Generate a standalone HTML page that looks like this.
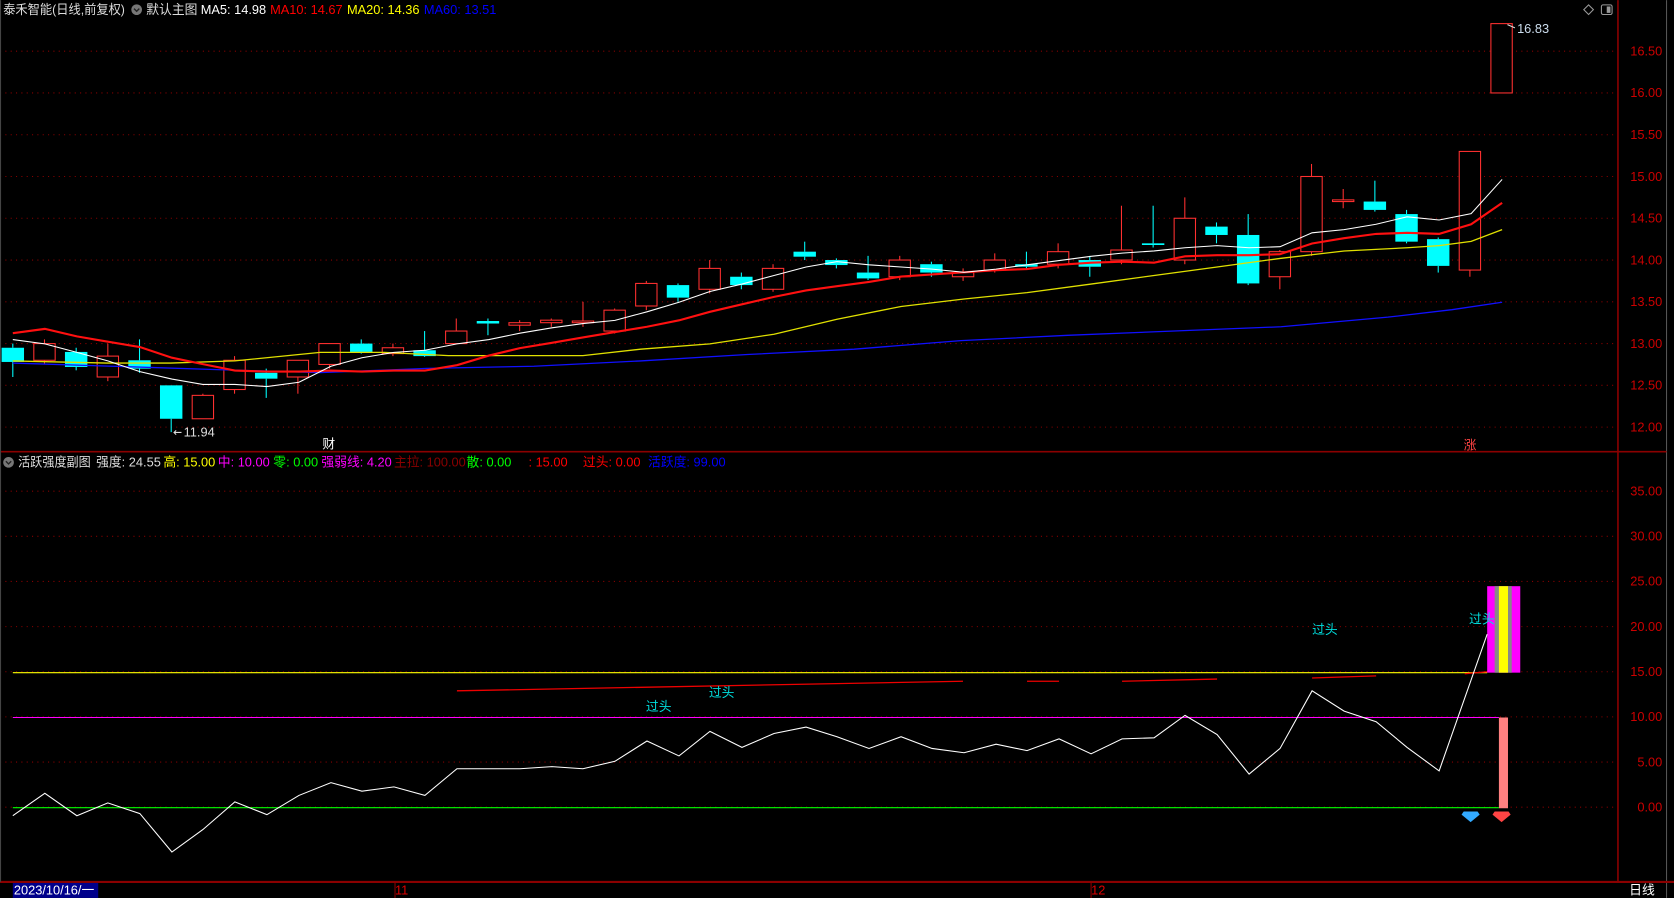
<!DOCTYPE html>
<html><head><meta charset="utf-8">
<style>
html,body{margin:0;padding:0;background:#000;overflow:hidden}
svg{display:block}
text{font-family:"Liberation Sans","Noto Sans CJK SC",sans-serif;font-size:12px}
</style></head>
<body>
<svg id="s" width="1674" height="898" viewBox="0 0 1568 841" xmlns="http://www.w3.org/2000/svg">
<rect width="1568" height="841" fill="#000"/>
<g id="grid"></g>
<line x1="1515.5" y1="0" x2="1515.5" y2="826" stroke="#8b0000" stroke-width="1.5"/>
<line x1="1561" y1="0" x2="1561" y2="841" stroke="#555" stroke-width="1"/>
<line x1="0" y1="423" x2="1561" y2="423" stroke="#8b0000" stroke-width="1.5"/>
<line x1="0" y1="826" x2="1568" y2="826" stroke="#8b0000" stroke-width="2"/>
<line x1="0.5" y1="0" x2="0.5" y2="826" stroke="#444"/>
<g id="candles"></g>
<g id="lines"></g>
<text x="3" y="13" fill="#ddd" textLength="114" lengthAdjust="spacingAndGlyphs">泰禾智能(日线,前复权)</text>
<circle cx="128" cy="9" r="5" fill="#777"/><path d="M125.5 8 L128 10.5 L130.5 8" stroke="#222" fill="none" stroke-width="1.3"/>
<text x="137" y="13" fill="#ddd">默认主图</text>
<text x="188" y="13" fill="#fff">MA5: 14.98</text>
<text x="253" y="13" fill="#f00">MA10: 14.67</text>
<text x="325" y="13" fill="#ff0">MA20: 14.36</text>
<text x="397" y="13" fill="#00f">MA60: 13.51</text>
<path d="M1488 4.5 L1492.5 9 L1488 13.5 L1483.5 9 Z" stroke="#999" fill="none"/>
<rect x="1500" y="4.5" width="10" height="9" rx="1.5" stroke="#999" fill="none"/><rect x="1505" y="6" width="3.5" height="6" fill="#999"/>
<circle cx="8" cy="433" r="5" fill="#777"/><path d="M5.5 432 L8 434.5 L10.5 432" stroke="#222" fill="none" stroke-width="1.3"/>
<text x="17" y="437" fill="#ddd" textLength="68" lengthAdjust="spacingAndGlyphs">活跃强度副图</text>
<text x="90" y="437" fill="#ddd">强度: 24.55</text>
<text x="153" y="437" fill="#ff0">高: 15.00</text>
<text x="204" y="437" fill="#f0f">中: 10.00</text>
<text x="256" y="437" fill="#0f0">零: 0.00</text>
<text x="301" y="437" fill="#f0f">强弱线: 4.20</text>
<text x="369" y="437" fill="#8b0000">主拉: 100.00</text>
<text x="437" y="437" fill="#0f0">散: 0.00</text>
<text x="495" y="437" fill="#f00">: 15.00</text>
<text x="546" y="437" fill="#f00">过头: 0.00</text>
<text x="607" y="437" fill="#00f">活跃度: 99.00</text>
<line x1="12" y1="630" x2="1393" y2="630" stroke="#ff0" stroke-width="1"/>
<line x1="12" y1="672" x2="1404" y2="672" stroke="#f0f" stroke-width="1"/>
<line x1="12" y1="756.5" x2="1404" y2="756.5" stroke="#0f0" stroke-width="1"/>
<g stroke="#e00" stroke-width="1.2">
<line x1="428" y1="647" x2="902" y2="638"/>
<line x1="962" y1="638" x2="992" y2="638"/>
<line x1="1051" y1="638" x2="1140" y2="636"/>
<line x1="1229" y1="635" x2="1289" y2="633"/>
<line x1="1372" y1="631" x2="1407" y2="628"/>
</g>
<rect x="1393" y="549" width="31" height="81" fill="#f0f"/>
<rect x="1400" y="549" width="16" height="81" fill="#888"/>
<rect x="1404" y="549" width="8.5" height="81" fill="#ff0"/>
<rect x="1404" y="672" width="8.5" height="85" fill="#ff8080"/>
<polyline fill="none" stroke="#fff" stroke-width="1" points="12,764 42,743 72,764 101,752 131,762 161,798 190,777 220,751 250,763 280,745 310,733 339,741 369,737 398,745 428,720 458,720 487,720 517,718 546,720 576,713 606,694 636,708 665,685 695,700 725,687 755,681 784,690 814,701 844,690 873,701 903,705 933,697 962,703 992,692 1022,706 1051,692 1081,691 1110,670 1140,688 1170,725 1199,701 1229,647 1259,666 1289,676 1318,700 1348,722 1393,594"/>
<path d="M1371 760 h13 l2 3 l-8.5 7 l-8.5 -7 z" fill="#3af"/>
<path d="M1400 760 h13 l2 3 l-8.5 7 l-8.5 -7 z" fill="#f44"/>
<g fill="#0dd">
<text x="605" y="666">过头</text><text x="664" y="653">过头</text><text x="1229" y="594">过头</text><text x="1376" y="584">过头</text>
</g>
<text x="302" y="420" fill="#fff">财</text>
<text x="1371" y="421" fill="#f44">涨</text>
<text x="172" y="409" fill="#ddd">11.94</text>
<path d="M170 405 h-7 m2 -2 l-2 2 l2 2" stroke="#ddd" fill="none"/>
<text x="1421" y="31" fill="#cde">16.83</text>
<path d="M1419 26 l-7 -3" stroke="#ddd" fill="none"/>
<g id="axis" fill="#c00" font-size="12"></g>
<rect x="12" y="827" width="80" height="14" fill="#00008b"/>
<text x="13" y="838" fill="#fff" font-size="11">2023/10/16/一</text>
<text x="370" y="838" fill="#d00" font-size="11">11</text>
<text x="1022" y="838" fill="#d00" font-size="11">12</text>
<line x1="370" y1="826" x2="370" y2="841" stroke="#8b0000"/><line x1="1022" y1="826" x2="1022" y2="841" stroke="#8b0000"/>
<text x="1526" y="838" fill="#fff" font-size="11">日线</text>
</svg>
<script>
var NS="http://www.w3.org/2000/svg";
function el(g,t,a){var e=document.createElementNS(NS,t);for(var k in a)e.setAttribute(k,a[k]);document.getElementById(g).appendChild(e);return e;}
function py(p){return 87+(16-p)*78.25;}
function sy(v){return 756-v*8.457;}
[16.5,16,15.5,15,14.5,14,13.5,13,12.5,12].forEach(function(p){var y=py(p);el('grid','line',{x1:0,x2:1515,y1:y,y2:y,stroke:'#800','stroke-dasharray':'1,4'});var t=el('axis','text',{x:1557,y:y+4,'text-anchor':'end'});t.textContent=p.toFixed(2);});
[35,30,25,20,15,10,5,0].forEach(function(v){var y=sy(v);el('grid','line',{x1:0,x2:1515,y1:y,y2:y,stroke:'#800','stroke-dasharray':'1,4'});var t=el('axis','text',{x:1557,y:y+4,'text-anchor':'end'});t.textContent=v.toFixed(2);});
var C=[[12.95,12.78,13.0,12.6],[12.8,13.0,13.05,12.75],[12.9,12.72,12.95,12.68],[12.6,12.85,13.0,12.55],[12.8,12.7,13.05,12.65],[12.5,12.1,12.5,11.94],[12.1,12.38,12.4,12.1],[12.45,12.8,12.85,12.4],[12.65,12.58,12.7,12.35],[12.6,12.8,12.8,12.4],[12.75,13.0,13.0,12.7],[13.0,12.9,13.05,12.88],[12.88,12.95,13.0,12.85],[12.92,12.85,13.15,12.84],[13.0,13.15,13.3,13.0],[13.27,13.24,13.3,13.1],[13.22,13.25,13.28,13.15],[13.25,13.28,13.3,13.2],[13.25,13.27,13.5,13.2],[13.15,13.4,13.42,13.12],[13.45,13.72,13.75,13.4],[13.7,13.55,13.72,13.5],[13.65,13.9,14.0,13.6],[13.8,13.7,13.85,13.65],[13.65,13.9,13.95,13.62],[14.1,14.04,14.22,14.0],[14.0,13.94,14.02,13.9],[13.85,13.78,14.05,13.76],[13.8,14.0,14.05,13.76],[13.95,13.85,13.98,13.8],[13.8,13.85,13.9,13.75],[13.88,14.0,14.08,13.85],[13.95,13.92,14.1,13.9],[13.95,14.1,14.2,13.9],[14.0,13.92,14.05,13.8],[14.0,14.12,14.65,13.95],[14.2,14.18,14.65,14.15],[14.0,14.5,14.75,13.95],[14.4,14.3,14.45,14.2],[14.3,13.72,14.55,13.7],[13.8,14.1,14.12,13.65],[14.1,15.0,15.15,14.05],[14.7,14.72,14.85,14.62],[14.7,14.6,14.95,14.58],[14.55,14.22,14.6,14.2],[14.25,13.93,14.27,13.85],[13.88,15.3,15.3,13.8],[16.0,16.83,16.83,16.0]];
C.forEach(function(c,i){var x=12+i*29.67;var up=c[1]>=c[0];var col=up?'#ff3030':'#00ffff';var top=py(Math.max(c[0],c[1])),bot=py(Math.min(c[0],c[1]));
el('candles','line',{x1:x,x2:x,y1:py(c[2]),y2:top,stroke:col});el('candles','line',{x1:x,x2:x,y1:bot,y2:py(c[3]),stroke:col});
var h=Math.max(bot-top,1.5);
if(up)el('candles','rect',{x:x-10,y:top,width:20,height:h,fill:'#000',stroke:col});else el('candles','rect',{x:x-10.5,y:top,width:21,height:h,fill:col});});
function pl(p,c,w){el('lines','polyline',{points:p,fill:'none',stroke:c,'stroke-width':w});}
pl("12,340 200,346 300,349 400,345 500,343 600,338 700,332 800,327 900,319 1000,314 1100,310 1200,306 1300,297 1360,290 1407,283","#1010ff",1.2);
pl("12,338 100,340 160,340 220,338 300,330 360,330 420,333 480,333 546,333 600,327 665,322 725,313 784,299 844,287 903,280 962,274 1022,266 1081,258 1140,250 1199,242 1259,235 1318,232 1348,230 1378,226 1407,215","#e0e000",1.2);
pl("12,312 42,308 72,315 101,320 131,325 161,335 190,341 220,347 250,348 280,348 310,347 339,348 369,347 398,347 428,342 458,333 487,326 517,321 546,316 576,311 606,306 636,300 665,292 695,285 725,278 755,272 784,268 814,264 844,259 873,257 903,255 933,253 962,252 992,248 1022,246 1051,245 1081,246 1110,240 1140,239 1170,239 1199,238 1229,228 1259,223 1289,219 1318,218 1348,219 1378,210 1407,190","#ff1010",2);
pl("12,318 42,322 72,330 101,338 131,348 161,355 190,360 220,360 250,362 280,358 310,343 339,335 369,330 398,328 428,322 458,318 487,312 517,307 546,303 576,300 606,292 636,283 665,273 695,266 725,258 755,250 784,245 814,248 844,250 873,252 903,255 933,252 962,248 992,244 1022,240 1051,237 1081,235 1110,232 1140,230 1170,232 1199,231 1229,218 1259,215 1289,210 1318,203 1348,206 1378,200 1407,168","#ffffff",1);
</script>
</body></html>
